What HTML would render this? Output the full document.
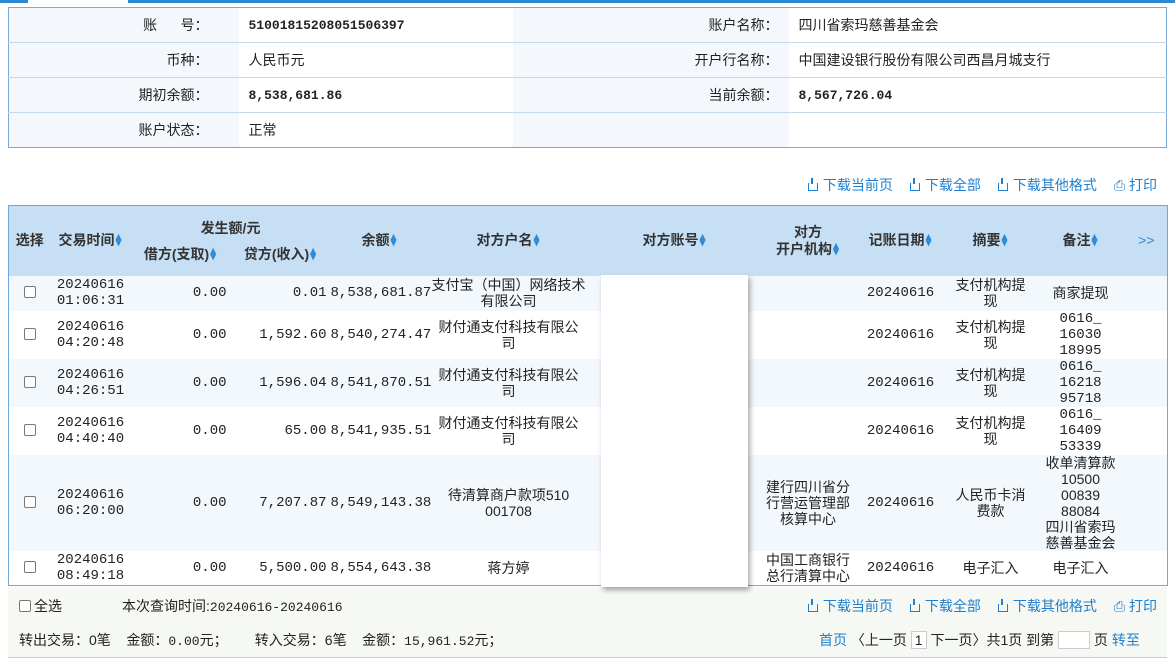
<!DOCTYPE html>
<html><head><meta charset="utf-8"><style>
*{margin:0;padding:0;box-sizing:border-box}
body{width:1175px;height:665px;background:#fff;font-family:"Liberation Sans","Noto Sans CJK SC",sans-serif;font-size:14px;color:#222;position:relative;overflow:hidden}
.mono{font-family:"Liberation Mono","Noto Sans CJK SC",monospace;font-size:13px}
.abs{position:absolute}
.info{left:8px;top:7px;width:1159px;height:141px;border:1px solid #7aa9d6;border-collapse:collapse}
.info td{height:35px;border-bottom:1px solid #c5d9ec;padding:0 10px}
.info tr:last-child td{border-bottom:none}
.lab{background:#f4f8fc;text-align:right}
.tool{color:#1f7fcf;font-size:14px}
.tool span{margin-left:17px}
.dl{display:inline-block;width:10px;height:8px;border:1.5px solid #1f7fcf;border-top:none;position:relative;margin-right:5px;vertical-align:-1px}
.dl:after{content:"";position:absolute;left:2.5px;top:-5px;width:1.5px;height:6px;background:#1f7fcf}
table.g{position:absolute;left:8px;top:205px;width:1159px;border-collapse:collapse;border:1px solid #6fa8dc;table-layout:fixed}
.g th{background:#c6dff4;font-weight:bold;color:#333;font-size:14px;text-align:center;line-height:17px}
.g td{text-align:center;line-height:16px;font-size:14px}
.g td.r{text-align:right;padding-right:4px}
.s{color:#2d8ad8;font-size:11px;display:inline-block;line-height:6px;vertical-align:-1px;width:8px}
.cb{display:inline-block;width:12px;height:12px;border:1px solid #777;border-radius:2px;background:#fff}
.odd td{background:#f3f8fc}
</style></head><body>
<div class="abs" style="left:0;top:0;width:28px;height:3px;background:#2a8bd4"></div>
<div class="abs" style="left:128px;top:0;width:1047px;height:3px;background:#2a8bd4"></div>
<table class="abs info">
<tr><td class="lab" style="width:230px;padding-right:30px">账&nbsp;&nbsp;&nbsp;&nbsp;&nbsp;&nbsp;号：</td><td class="mono" style="width:274px;font-weight:bold">51001815208051506397</td><td class="lab" style="width:276px">账户名称：</td><td>四川省索玛慈善基金会</td></tr>
<tr><td class="lab" style="padding-right:30px">币种：</td><td>人民币元</td><td class="lab">开户行名称：</td><td>中国建设银行股份有限公司西昌月城支行</td></tr>
<tr><td class="lab" style="padding-right:30px">期初余额：</td><td class="mono" style="font-weight:bold">8,538,681.86</td><td class="lab">当前余额：</td><td class="mono" style="font-weight:bold">8,567,726.04</td></tr>
<tr><td class="lab" style="padding-right:30px">账户状态：</td><td>正常</td><td class="lab"></td><td></td></tr>
</table>
<div class="abs tool" style="right:18px;top:175px"><span><i class="dl"></i>下载当前页</span><span><i class="dl"></i>下载全部</span><span><i class="dl"></i>下载其他格式</span><span>⎙ 打印</span></div>
<table class="g">
<colgroup><col style="width:42px"><col style="width:80px"><col style="width:100px"><col style="width:100px"><col style="width:98px"><col style="width:160px"><col style="width:172px"><col style="width:95px"><col style="width:90px"><col style="width:90px"><col style="width:90px"><col style="width:42px"></colgroup>
<tr style="height:35px"><th rowspan="2">选择</th><th rowspan="2">交易时间<span class="s">▴<br>▾</span></th><th colspan="2" style="padding-top:10px">发生额/元</th><th rowspan="2">余额<span class="s">▴<br>▾</span></th><th rowspan="2">对方户名<span class="s">▴<br>▾</span></th><th rowspan="2">对方账号<span class="s">▴<br>▾</span></th><th rowspan="2">对方<br>开户机构<span class="s">▴<br>▾</span></th><th rowspan="2">记账日期<span class="s">▴<br>▾</span></th><th rowspan="2">摘要<span class="s">▴<br>▾</span></th><th rowspan="2">备注<span class="s">▴<br>▾</span></th><th rowspan="2" style="color:#2d8ad8;font-weight:normal">&gt;&gt;</th></tr>
<tr style="height:35px"><th style="padding-bottom:8px">借方(支取)<span class="s">▴<br>▾</span></th><th style="padding-bottom:8px">贷方(收入)<span class="s">▴<br>▾</span></th></tr>
<tr class="odd" style="height:35px"><td><i class="cb"></i></td><td class="mono">20240616<br>01:06:31</td><td class="r mono">0.00</td><td class="r mono">0.01</td><td class="r mono">8,538,681.87</td><td>支付宝（中国）网络技术有限公司</td><td></td><td></td><td class="mono">20240616</td><td style="padding:0 8px">支付机构提现</td><td>商家提现</td><td></td></tr>
<tr style="height:48px"><td><i class="cb"></i></td><td class="mono">20240616<br>04:20:48</td><td class="r mono">0.00</td><td class="r mono">1,592.60</td><td class="r mono">8,540,274.47</td><td style="padding:0 8px">财付通支付科技有限公司</td><td></td><td></td><td class="mono">20240616</td><td style="padding:0 8px">支付机构提现</td><td class="mono">0616_<br>16030<br>18995</td><td></td></tr>
<tr class="odd" style="height:48px"><td><i class="cb"></i></td><td class="mono">20240616<br>04:26:51</td><td class="r mono">0.00</td><td class="r mono">1,596.04</td><td class="r mono">8,541,870.51</td><td style="padding:0 8px">财付通支付科技有限公司</td><td></td><td></td><td class="mono">20240616</td><td style="padding:0 8px">支付机构提现</td><td class="mono">0616_<br>16218<br>95718</td><td></td></tr>
<tr style="height:48px"><td><i class="cb"></i></td><td class="mono">20240616<br>04:40:40</td><td class="r mono">0.00</td><td class="r mono">65.00</td><td class="r mono">8,541,935.51</td><td style="padding:0 8px">财付通支付科技有限公司</td><td></td><td></td><td class="mono">20240616</td><td style="padding:0 8px">支付机构提现</td><td class="mono">0616_<br>16409<br>53339</td><td></td></tr>
<tr class="odd" style="height:96px"><td><i class="cb"></i></td><td class="mono">20240616<br>06:20:00</td><td class="r mono">0.00</td><td class="r mono">7,207.87</td><td class="r mono">8,549,143.38</td><td>待清算商户款项510<br>001708</td><td></td><td style="padding:0 3px">建行四川省分行营运管理部核算中心</td><td class="mono">20240616</td><td style="padding:0 8px">人民币卡消费款</td><td style="padding:0 4px">收单清算款<br>10500<br>00839<br>88084<br>四川省索玛慈善基金会</td><td></td></tr>
<tr style="height:35px"><td><i class="cb"></i></td><td class="mono">20240616<br>08:49:18</td><td class="r mono">0.00</td><td class="r mono">5,500.00</td><td class="r mono">8,554,643.38</td><td>蒋方婷</td><td></td><td style="padding:0 3px">中国工商银行总行清算中心</td><td class="mono">20240616</td><td>电子汇入</td><td>电子汇入</td><td></td></tr>
</table>
<div class="abs" style="left:8px;top:587px;width:1159px;height:71px;background:#f6f8f3;border-bottom:1px solid #ccc"></div>
<div class="abs" style="left:601px;top:275px;width:147px;height:312px;background:#fff;box-shadow:2px 3px 5px rgba(0,0,0,.35)"></div>
<div class="abs" style="left:19px;top:596px"><i class="cb" style="vertical-align:-1px;margin-right:3px"></i>全选</div>
<div class="abs" style="left:122px;top:596px">本次查询时间:<span class="mono">20240616-20240616</span></div>
<div class="abs tool" style="right:18px;top:596px"><span><i class="dl"></i>下载当前页</span><span><i class="dl"></i>下载全部</span><span><i class="dl"></i>下载其他格式</span><span>⎙ 打印</span></div>
<div class="abs" style="left:19px;top:630px">转出交易：0笔&nbsp;&nbsp;&nbsp;&nbsp;金额：<span class="mono">0.00</span>元；&nbsp;&nbsp;&nbsp;&nbsp;&nbsp;&nbsp;&nbsp;转入交易：6笔&nbsp;&nbsp;&nbsp;&nbsp;金额：<span class="mono">15,961.52</span>元；</div>
<div class="abs" style="left:819px;top:630px"><span style="color:#1f7fcf">首页</span> 〈上一页 <span style="display:inline-block;border:1px solid #ccc;padding:0 3px;background:#fff">1</span> 下一页〉共1页 到第 <span style="display:inline-block;width:32px;height:18px;border:1px solid #ccc;background:#fff;vertical-align:-4px"></span> 页 <span style="color:#1f7fcf">转至</span></div>
</body></html>
